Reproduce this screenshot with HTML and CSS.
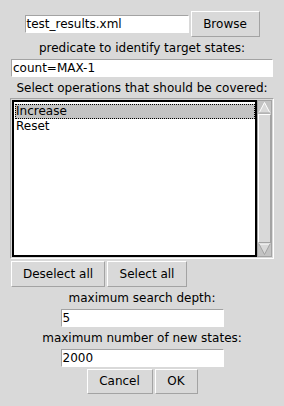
FILE: index.html
```html
<!DOCTYPE html>
<html lang="en">
<head>
  <meta charset="UTF-8" />
  <title>Test generation</title>
  <link rel="stylesheet" href="styles.css">
</head>
<body>
  <div class="dialog">
    <div class="file-row">
      <div class="entry file-entry">test_results.xml</div>
      <div class="btn browse">Browse</div>
    </div>

    <div class="label">predicate to identify target states:</div>
    <div class="entry wide-entry">count=MAX-1</div>

    <div class="label">Select operations that should be covered:</div>
    <div class="list-frame">
      <div class="listbox">
        <div class="item selected">Increase</div>
        <div class="item">Reset</div>
      </div>
      <div class="scrollbar">
        <div class="arrow up">
          <svg width="13" height="13" viewBox="0 0 13 13">
            <polygon points="6.5,1.5 12,12 1,12" fill="#d9d9d9" />
            <polyline points="1,12 6.5,1.5 12,12" fill="none" stroke="#ffffff" />
            <line x1="1" y1="12" x2="12" y2="12" stroke="#a3a3a3" />
          </svg>
        </div>
        <div class="slider"></div>
        <div class="arrow down">
          <svg width="13" height="13" viewBox="0 0 13 13">
            <polygon points="1,1 12,1 6.5,11.5" fill="#d9d9d9" />
            <polyline points="1,1 12,1" fill="none" stroke="#ffffff" />
            <polyline points="1,1 6.5,11.5 12,1" fill="none" stroke="#a3a3a3" />
          </svg>
        </div>
      </div>
    </div>

    <div class="select-row">
      <div class="btn deselect">Deselect all</div>
      <div class="btn select-all">Select all</div>
    </div>

    <div class="label">maximum search depth:</div>
    <div class="entry small-entry">5</div>

    <div class="label">maximum number of new states:</div>
    <div class="entry small-entry">2000</div>

    <div class="ok-row">
      <div class="btn cancel">Cancel</div>
      <div class="btn ok">OK</div>
    </div>
  </div>
</body>
</html>
```

FILE: styles.css
```css
body {
  margin: 0;
  background: #d9d9d9;
  font-family: "DejaVu Sans", sans-serif;
  font-size: 12px;
  color: #000;
}

.dialog {
  width: 284px;
  height: 406px;
  display: flex;
  flex-direction: column;
  align-items: center;
}

.file-row {
  margin-top: 11px;
  display: flex;
  align-items: center;
  gap: 2px;
}

.entry {
  box-sizing: border-box;
  height: 18px;
  line-height: 16px;
  background: #fff;
  padding-left: 1px;
  border: 1px solid;
  border-color: #a3a3a3 #ffffff #ffffff #a3a3a3;
  white-space: nowrap;
}

.file-entry {
  width: 164px;
}

.wide-entry {
  width: 262px;
}

.small-entry {
  width: 163px;
}

.btn {
  box-sizing: border-box;
  height: 26px;
  line-height: 24px;
  text-align: center;
  border: 1px solid;
  border-color: #ffffff #a3a3a3 #a3a3a3 #ffffff;
  background: #d9d9d9;
}

.browse {
  width: 69px;
}

.label {
  height: 22px;
  line-height: 22px;
  text-align: center;
  white-space: nowrap;
}

.list-frame {
  box-sizing: border-box;
  width: 264px;
  height: 161px;
  margin-top: -1px;
  display: flex;
  border: 1px solid;
  border-color: #a3a3a3 #ffffff #ffffff #a3a3a3;
  padding: 1px;
}

.listbox {
  box-sizing: border-box;
  flex: 1;
  background: #fff;
  border: 2px solid;
  border-color: #000 #000 #000 #000;
  padding: 2px 0 0 1px;
}

.item {
  height: 15px;
  line-height: 15px;
  padding-left: 1px;
}

.selected {
  background: #c3c3c3;
  outline: 1px dotted #000;
  outline-offset: -1px;
}

.scrollbar {
  box-sizing: border-box;
  width: 15px;
  display: flex;
  flex-direction: column;
  background: #c3c3c3;
  border: 1px solid #a3a3a3;
}

.arrow {
  height: 13px;
}

.arrow svg {
  display: block;
}

.slider {
  flex: 1;
  background: #d9d9d9;
  border: 1px solid;
  border-color: #ffffff #a3a3a3 #a3a3a3 #ffffff;
}

.select-row {
  align-self: flex-start;
  margin-left: 11px;
  margin-top: 2px;
  display: flex;
  gap: 2px;
}

.deselect {
  width: 94px;
}

.select-all {
  width: 80px;
}

.ok-row {
  margin-top: 2px;
  display: flex;
  gap: 2px;
}

.ok-row .btn {
  height: 25px;
  line-height: 23px;
}

.cancel {
  width: 66px;
}

.ok {
  width: 43px;
}
```
